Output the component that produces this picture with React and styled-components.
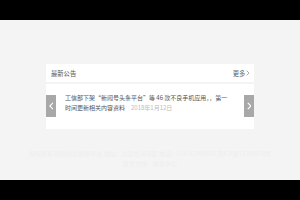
import React from "react"
import styled, { createGlobalStyle } from "styled-components"

const Global = createGlobalStyle`
  html, body { margin: 0; padding: 0; background: #000; }
  body { font-family: "Noto Sans CJK SC", "Noto Sans", sans-serif; }
`

const Page = styled.div`
  width: 300px;
  height: 200px;
  display: flex;
  flex-direction: column;
  background: #000;
`

const Stage = styled.div`
  margin-top: 20px;
  height: 160px;
  background: #f4f4f4;
  display: flex;
  flex-direction: column;
  align-items: center;
  padding-top: 44px;
  box-sizing: border-box;
  overflow: hidden;
`

const Card = styled.div`
  width: 208px;
  display: flex;
  flex-direction: column;
  gap: 2px;
`

const Header = styled.div`
  height: 18px;
  background: #fff;
  display: flex;
  align-items: center;
  justify-content: space-between;
  padding: 0 4px 0 5px;
  font-size: 6.3px;
  color: #555;
`

const More = styled.span`
  display: flex;
  align-items: center;
  gap: 1px;
  color: #666;
`

const Body = styled.div`
  height: 45px;
  background: #fff;
  display: flex;
  align-items: flex-start;
  padding-top: 11px;
  box-sizing: border-box;
`

const Arrow = styled.div`
  width: 10px;
  height: 22px;
  background: #a8a8a8;
  display: flex;
  align-items: center;
  justify-content: center;
  flex-shrink: 0;
`

const Notice = styled.p`
  margin: -2px auto 0 9px;
  width: 166px;
  font-size: 6px;
  line-height: 10px;
  color: #555;
`

const Date = styled.span`
  display: inline-block;
  color: #bbb;
  margin-left: 6px;
`

const Footer = styled.div`
  margin-top: 20px;
  width: 100%;
  text-align: center;
  font-size: 6px;
  line-height: 10px;
  color: #eeeeee;
  white-space: nowrap;
`

const Chevron = ({ dir, size = 8, color = "#fff", width = 1.4 }) => (
  <svg width={size * 0.6} height={size} viewBox="0 0 6 10">
    <path
      d={dir === "left" ? "M5 1 L1 5 L5 9" : "M1 1 L5 5 L1 9"}
      fill="none"
      stroke={color}
      strokeWidth={width}
    />
  </svg>
)

const App = () => (
  <>
    <Global />
    <Page>
      <Stage>
        <Card>
          <Header>
            <span>最新公告</span>
            <More>
              更多 <Chevron dir="right" size={6} color="#777" width={1} />
            </More>
          </Header>
          <Body>
            <Arrow>
              <Chevron dir="left" />
            </Arrow>
            <Notice>
              工信部下架“新闻号头条平台”等 46 款不良手机应用，，第一时间更新相关内容资料
              <Date>2018年1月12日</Date>
            </Notice>
            <Arrow>
              <Chevron dir="right" />
            </Arrow>
          </Body>
        </Card>
        <Footer>
          版权所有 网络信息服务平台 地址：北京市海淀区 电话：010-12345678 京ICP备12345678号
          <br />
          技术支持：信息中心
        </Footer>
      </Stage>
    </Page>
  </>
)

export default App
